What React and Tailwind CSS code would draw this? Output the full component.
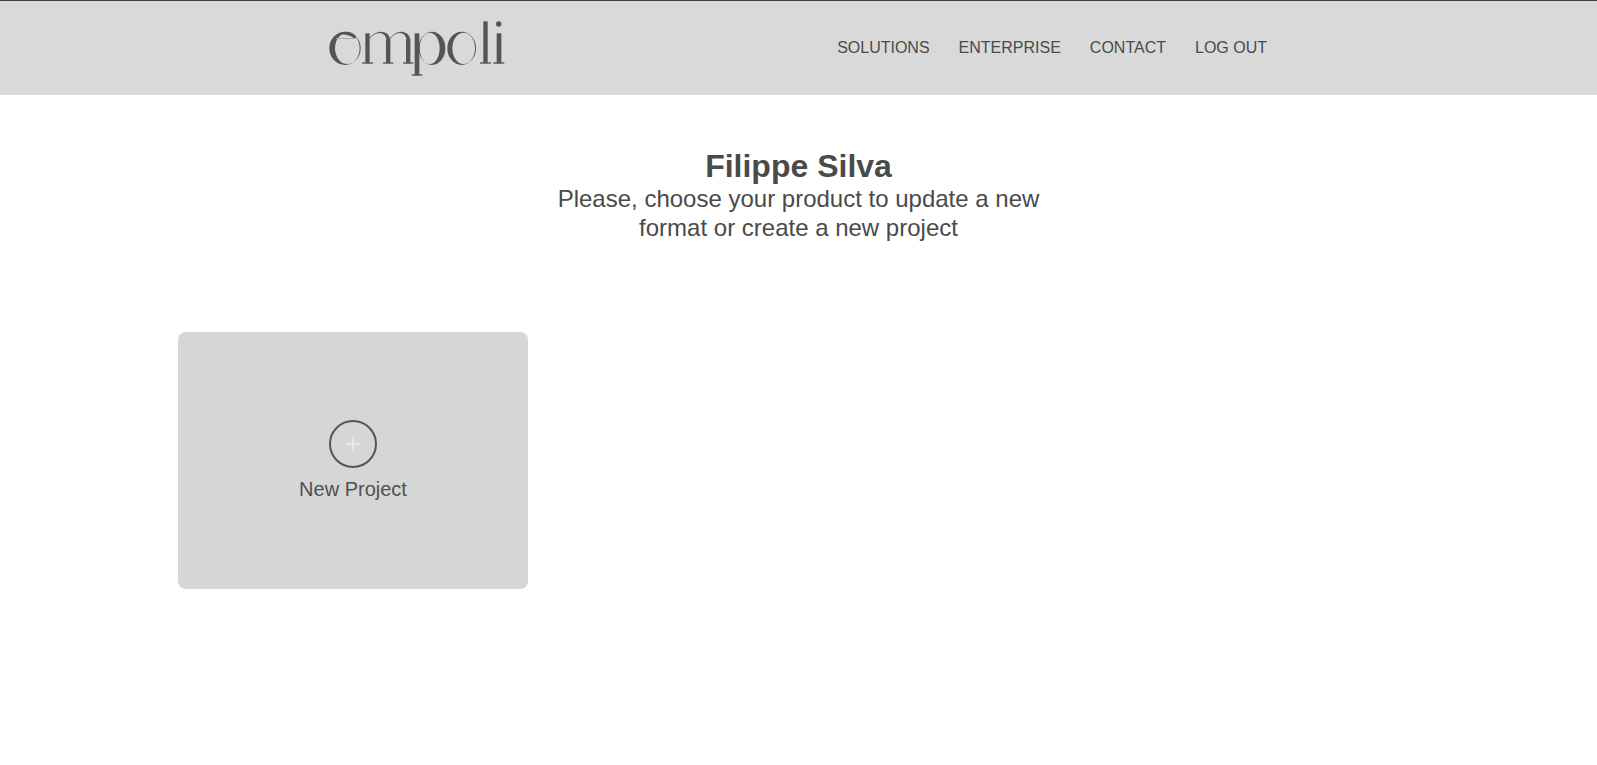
const sans = { fontFamily: '"Liberation Sans", Arial, sans-serif' };

function ring(ox, orx, ory, ix, irx, iry, cy) {
  const e = (cx, rx, ry) =>
    `M${cx - rx} ${cy}a${rx} ${ry} 0 1 0 ${rx * 2} 0a${rx} ${ry} 0 1 0 ${-rx * 2} 0Z`;
  return e(ox, orx, ory) + e(ix, irx, iry);
}

function Logo() {
  return (
    <svg width="178" height="60" viewBox="54 54 534 180" aria-label="empoli" className="block">
      <g fill="#555555">
        <path fillRule="evenodd" d={ring(105, 47, 50, 112, 37, 47, 145)} />
        <path d="M82 106C98 91 122 92 137 107L137 116L131 114C118 104 100 101 82 106Z" />
        <rect x="78" y="114" width="58" height="3" fill="#a9a9a9" />

        <rect x="166" y="100" width="13" height="90" />
        <rect x="156" y="187" width="33" height="4" />
        <rect x="228" y="118" width="13" height="72" />
        <rect x="219" y="187" width="31" height="4" />
        <rect x="288" y="118" width="13" height="72" />
        <rect x="279" y="187" width="31" height="4" />
        <path d="M178 114C188 102 200 95 212 95C230 95 241 106 241 124L230 124C230 110 222 99 208 99C198 99 188 105 178 117Z" />
        <path d="M240 114C250 102 261 95 273 95C290 95 301 106 301 124L290 124C290 110 283 99 269 99C259 99 249 105 240 117Z" />

        <rect x="314" y="100" width="14" height="126" />
        <rect x="305" y="223" width="32" height="4" />
        <path fillRule="evenodd" d={ring(366, 40, 50, 359, 30, 47, 145)} />

        <path fillRule="evenodd" d={ring(455, 43, 50, 461, 34, 47, 145)} />

        <rect x="520" y="64" width="13" height="126" />
        <rect x="510" y="187" width="33" height="4" />
        <rect x="560" y="100" width="14" height="90" />
        <rect x="550" y="187" width="33" height="4" />
        <circle cx="566" cy="72" r="8" />
      </g>
    </svg>
  );
}

export default function App() {
  return (
    <div className="min-h-[765px] bg-white text-[#4a4a4a]" style={sans}>
      <header className="h-[95px] bg-[#d9d9d9] border-t border-[#3a3d47]">
        <div className="w-[941px] h-full mx-auto flex items-center justify-between">
          <Logo />
          <nav className="flex items-center gap-[29px] pr-[2px] text-base text-[#4a4a4a]">
            <a>SOLUTIONS</a>
            <a>ENTERPRISE</a>
            <a>CONTACT</a>
            <a>LOG OUT</a>
          </nav>
        </div>
      </header>
      <main>
        <div className="pt-[54px] flex flex-col items-center text-center">
          <h1 className="text-[32px] leading-[35px] font-bold">Filippe Silva</h1>
          <p className="w-[500px] text-2xl leading-[29px]">
            Please, choose your product to update a new format or create a new project
          </p>
        </div>
        <div className="pt-[90px] pl-[178px]">
          <div className="w-[350px] h-[257px] pt-[88px] rounded-lg bg-[#d6d6d6] flex flex-col items-center">
            <div className="w-12 h-12 rounded-full border-2 border-[#555555] flex items-center justify-center">
              <svg width="14" height="14" viewBox="0 0 14 14" stroke="#eeeeee" strokeWidth="1.5">
                <path d="M7 0v14M0 7h14" />
              </svg>
            </div>
            <span className="mt-[7px] text-xl leading-7 text-[#505050]">New Project</span>
          </div>
        </div>
      </main>
    </div>
  );
}
